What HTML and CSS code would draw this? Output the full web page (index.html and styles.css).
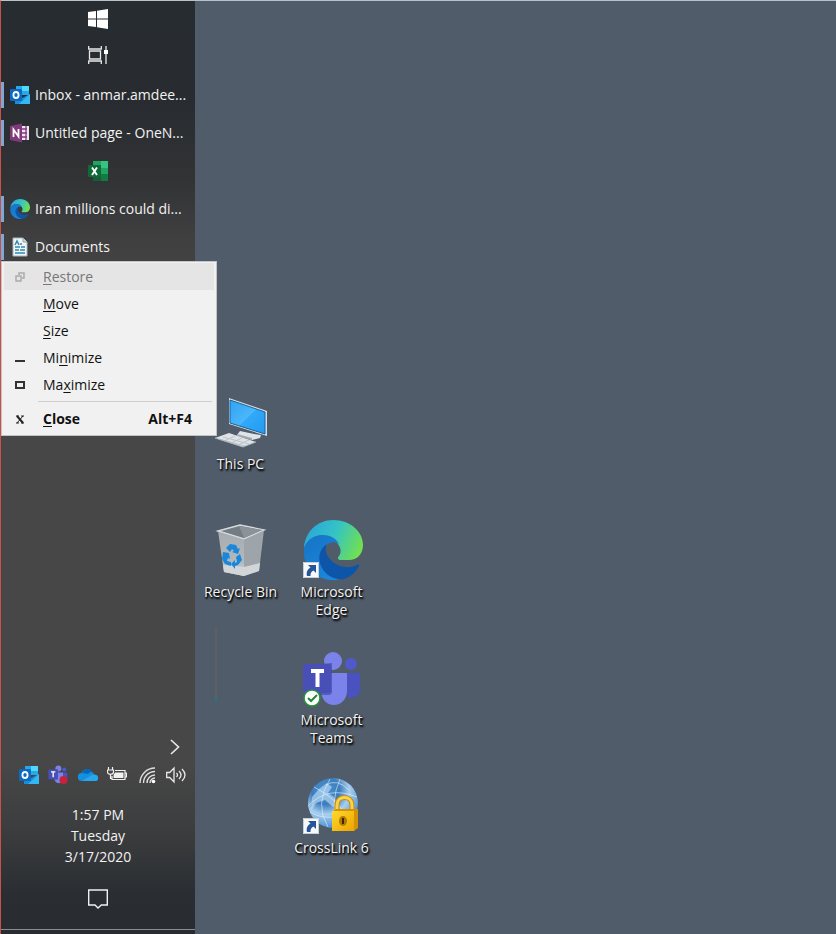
FILE: index.html
```html
<!DOCTYPE html>
<html lang="en">
<head>
<meta charset="utf-8">
<meta name="viewport" content="width=device-width, initial-scale=1">
<title>Desktop</title>
<link rel="stylesheet" href="styles.css">
</head>
<body>
<svg class="defs" aria-hidden="true">
  <defs>
    <linearGradient id="edgeTop" x1="0" y1=".3" x2="1" y2=".6">
      <stop offset="0" stop-color="#2aa5dc"/><stop offset=".5" stop-color="#35c4c4"/><stop offset="1" stop-color="#72e04e"/>
    </linearGradient>
    <linearGradient id="edgeLeft" x1="0" y1="0" x2=".6" y2="1">
      <stop offset="0" stop-color="#1673c4"/><stop offset="1" stop-color="#1b86dc"/>
    </linearGradient>
    <linearGradient id="screen" x1="0" y1="0" x2="1" y2="1">
      <stop offset="0" stop-color="#2fa3f2"/><stop offset=".5" stop-color="#4bb6fb"/><stop offset=".52" stop-color="#32a8f8"/><stop offset="1" stop-color="#219bf2"/>
    </linearGradient>
    <linearGradient id="binFace" x1="0" y1="0" x2="0" y2="1">
      <stop offset="0" stop-color="#a5abb0"/><stop offset=".7" stop-color="#b4b9bd"/><stop offset="1" stop-color="#dcdedf"/>
    </linearGradient>
    <radialGradient id="globe" cx=".35" cy=".25" r=".8">
      <stop offset="0" stop-color="#4d93d2"/><stop offset=".35" stop-color="#3c7dbd"/><stop offset=".6" stop-color="#a9cfee"/><stop offset="1" stop-color="#3a86cf"/>
    </radialGradient>
    <linearGradient id="lock" x1="0" y1="0" x2="1" y2="1">
      <stop offset="0" stop-color="#ffd92e"/><stop offset="1" stop-color="#eda400"/>
    </linearGradient>
    <symbol id="outlook" viewBox="0 0 20 20">
      <path d="M6 1h13v9H6z" fill="#28a8ea"/><path d="M12 1h7v5h-7z" fill="#50d9ff"/><path d="M6 6h6v5H6z" fill="#0364b8"/>
      <path d="M5 10l7 3 8-4v10H5z" fill="#1490df"/><path d="M20 9v10H9z" fill="#35b8f1"/>
      <rect y="4" width="12" height="12" rx="1" fill="#0a6ac4"/>
      <ellipse cx="6" cy="10" rx="2.6" ry="3" fill="none" stroke="#fff" stroke-width="1.800"/>
    </symbol>
    <symbol id="edge" viewBox="0 0 60 60">
      <path d="M1 28C2 12 14 0 30 0c18 0 30 12 30 25 0 9-6 15-14 15h-8c-3 0-4-2-2-4 3-4 2-10-4-15-7-8-22-9-31 7z" fill="url(#edgeTop)"/>
      <path d="M1 28c3-8 10-13 18-13 8 0 14 3 17 9-6-4-13-1-14 5-2 12 3 24 14 30-2 1-4 1-6 1C13 60-1 46 1 28z" fill="url(#edgeLeft)"/>
      <path d="M24 24c-8 5-10 15-5 24 5 9 14 12 22 11 7-2 12-7 15-13 0-1-1-2-2-1-10 5-22 1-28-7-4-5-4-10-2-14z" fill="#0d55a8"/>
    </symbol>
    <symbol id="shortcut" viewBox="0 0 16 16">
      <path d="M0 0h16v16H0z" fill="#f7f8fa"/><path d="M.5.5h15v15H.5z" fill="none" stroke="#c9ced6"/>
      <path d="M5 3h8v8l-2.500-2.500C8 10 7.500 11 7.500 14H4c-1-4 .5-6.500 3.500-8.500z" fill="#28549a"/>
    </symbol>
    <symbol id="teams" viewBox="0 0 60 56">
      <circle cx="49" cy="13" r="6" fill="#5059c9"/><path d="M42 22h16v17c0 5-6 9-12 8z" fill="#4a52bf"/>
      <circle cx="31" cy="10" r="9" fill="#7b83eb"/>
      <path d="M20 22h25v18c0 8-6 14-13 14-8 0-12-6-13-13z" fill="#7b83eb"/>
      <path d="M30 12v29c0 2-2 3-3 3h-8V13z" fill="#40469e" opacity=".65"/>
      <rect x="1" y="13" width="28" height="29" rx="2" fill="#4850b8"/>
      <path d="M9 20h13M15.500 20v16" stroke="#fff" stroke-width="4" fill="none"/>
    </symbol>
  </defs>
</svg>

<div class="screen">
  <aside class="taskbar">
    <div class="system">
      <button class="tool" aria-label="Start">
        <svg width="20" height="20" viewBox="0 0 20 20" fill="#fff"><path d="M0 3l8-1v7.500H0zM9 1.800L20 0v9.500H9zM0 10.500h8V18l-8-1zM9 10.500h11V20L9 18.300z"/></svg>
      </button>
      <button class="tool" aria-label="Task View">
        <svg width="20" height="20" viewBox="0 0 20 20" fill="none" stroke="#e8e8e8" stroke-width="1.300"><path d="M.7 1v3h12.600V1M.7 19v-3h12.600v3M1.500 6h11v8h-11zM18 1v18"/><path d="M16 5h4v4h-4z" fill="#fff" stroke="none"/></svg>
      </button>
    </div>

    <nav class="tasks" aria-label="Open windows">
      <button class="task open"><svg class="app"><use href="#outlook"/></svg><span>Inbox - anmar.amdee...</span></button>
      <button class="task open">
        <svg class="app" viewBox="0 0 20 20"><path d="M11 3h8v14h-8z" fill="#f3e6f3"/><path d="M12 6h5M12 10h5M12 14h5M16 3v14" stroke="#80397b" stroke-width="1.300"/><path d="M0 3l12-2.500v19L0 17z" fill="#80397b"/><path d="M3.500 14V6.500l5 7V6" fill="none" stroke="#fff" stroke-width="1.800"/></svg>
        <span>Untitled page - OneN...</span>
      </button>
      <button class="task pinned" aria-label="Excel">
        <svg class="app" viewBox="0 0 20 20"><path d="M5 0h15v20H5z" fill="#21a366"/><path d="M13 0h7v7h-7z" fill="#33c481"/><path d="M5 6h8v7H5z" fill="#107c41"/><path d="M5 13h15v7H5z" fill="#185c37"/><path d="M13 13h7v7h-7z" fill="#107c41"/><rect y="4" width="13" height="12" rx="1" fill="#0e6b38"/><path d="M4 6.500l5 7.500M9 6.500L4 14" stroke="#fff" stroke-width="1.900"/></svg>
      </button>
      <button class="task open"><svg class="app"><use href="#edge"/></svg><span>Iran millions could di...</span></button>
      <button class="task open">
        <svg class="app" viewBox="0 0 20 20"><path d="M3 1h10l4 4v14H3z" fill="#f1f5f7" stroke="#a9b6bd"/><path d="M13 1v4h4" fill="#cbd8de" stroke="#91a2ab"/><path d="M5 8l2-4 2 4M10 7h2M5 10h5M11 10h4M5 13h4M10 13h5M5 16h10" fill="none" stroke="#3189b4" stroke-width="1.500"/></svg>
        <span>Documents</span>
      </button>
    </nav>

    <div class="status">
      <button class="more" aria-label="Show hidden icons"><svg width="10" height="16" viewBox="0 0 10 16" fill="none" stroke="#e6e6e6" stroke-width="1.700"><path d="M1 1l7.500 7L1 15"/></svg></button>
      <div class="tray">
        <button aria-label="Outlook"><svg width="20" height="20"><use href="#outlook"/></svg></button>
        <button aria-label="Teams"><svg width="20" height="20" viewBox="0 0 20 20"><svg width="20" height="19"><use href="#teams"/></svg><circle cx="15.500" cy="15" r="4" fill="#c9213c"/></svg></button>
        <button aria-label="OneDrive"><svg width="20" height="20" viewBox="0 0 20 20"><path d="M4 16a4 4 0 0 1-.5-8C6 3 12 3 14 7l3 3c4 1 4 6 0 6z" fill="#1490df"/><path d="M4 8C7 3 12 3 14 7c-2 0-3 .8-4 2z" fill="#0364b8"/><path d="M4 16l10-6c5-1 7 1 6 4-.5 1.500-1.500 2-3 2z" fill="#28a8ea"/></svg></button>
        <button aria-label="Battery"><svg width="20" height="20" viewBox="0 0 20 20" fill="none" stroke="#f0f0f0" stroke-width="1.200"><path d="M8 5.500h10v9H5V11M18.500 8h1v4h-1M1.500 2v3M5.500 2v3M.5 5h6v2c0 3-6 3-6 0zM3.500 9v4.500H5"/><path d="M8 7.500h8.500V13H6.500v-3z" fill="#f0f0f0" stroke="none"/></svg></button>
        <button aria-label="Wi-Fi"><svg width="20" height="20" viewBox="0 0 20 20" fill="none" stroke="#e0e0e0" stroke-width="1.400"><path d="M3 18A15 15 0 0 1 18 3M6.500 18A11.500 11.500 0 0 1 18 6.500M10 18a8 8 0 0 1 8-8M13 18a5 5 0 0 1 5-5"/><circle cx="16.500" cy="16.500" r="1.800" fill="#fff" stroke="none"/></svg></button>
        <button aria-label="Volume"><svg width="20" height="20" viewBox="0 0 20 20" fill="none" stroke="#e8e8e8" stroke-width="1.300"><path d="M.7 7.500h3L8 3v14l-4.300-4.500h-3zM10.500 8q2 2 0 4M13 6q4 4 0 8M16 4q6 6 0 12"/></svg></button>
      </div>
      <div class="clock"><time>1:57 PM</time><span>Tuesday</span><span>3/17/2020</span></div>
      <button class="notify" aria-label="Notifications"><svg width="20" height="20" viewBox="0 0 20 20" fill="none" stroke="#f0f0f0" stroke-width="1.400"><path d="M.7 1h18.600v15h-6L10 19l-3-3H.7z"/></svg></button>
    </div>
  </aside>

  <main class="desktop">
    <button class="shortcut pc">
      <svg class="picture" viewBox="0 0 64 64">
        <path d="M20 7l38 13v25L20 33z" fill="#d7dde2"/><path d="M21 9l35 12v22L21 32z" fill="url(#screen)" stroke="#18639b"/>
        <path d="M31 40l14 3 7 1-1 3-8 2-15-5z" fill="#dfe4e8"/><path d="M28 43l15 4v2l-15-4z" fill="#9da9b2"/>
        <path d="M6 47l14-5 27 9-13 5z" fill="#dfe3e7"/><path d="M10 48l26 7M14 46l26 7M15 50l11-5M22 52l11-5M29 54l11-5" stroke="#bcc4ca" fill="none"/><path d="M6 47l28 9 13-5" fill="none" stroke="#a5afb8"/>
      </svg>
      <span>This PC</span>
    </button>
    <button class="shortcut bin">
      <svg class="picture" viewBox="0 0 64 64">
        <path d="M9 12l22-6 24 5-20 9z" fill="#747c83" stroke="#d7dadd" stroke-width="1.500"/><path d="M30 7l24 4-19 8z" fill="#8b9298"/>
        <path d="M9 12l26 8v37l-20-4z" fill="url(#binFace)"/><path d="M35 20l20-9-5 41-15 5z" fill="#9ea5aa"/><path d="M14 46l21 2 16-4-1 8-15 5-20-4z" fill="#d3d6d8"/>
        <path d="M9 12l26 8 20-9" fill="none" stroke="#d9dcde"/>
        <g fill="#1987dc"><path d="M17 29l4-4 6 1 2 4 2-1-2 6-6-2 2-1-2-2-2 3z"/><path d="M14 33l6 1 1 6-2-1-1 3 4 1v4l-6-2-3-5z"/><path d="M31 35l2 6-4 5-3 1v3l-4-5 4-4v3l2-1-1-5z"/></g>
      </svg>
      <span>Recycle Bin</span>
    </button>
    <button class="shortcut edge">
      <svg class="picture" viewBox="0 0 64 64"><svg x="3" y="1" width="60" height="60"><use href="#edge"/></svg><svg x="3" y="43" width="16" height="16"><use href="#shortcut"/></svg></svg>
      <span>Microsoft Edge</span>
    </button>
    <button class="shortcut chat">
      <svg class="picture" viewBox="0 0 64 64"><svg x="2" y="4" width="60" height="56"><use href="#teams"/></svg><circle cx="12" cy="51" r="8" fill="#fff" stroke="#26913b" stroke-width="1.500"/><path d="M8 51l3 3 6-6" fill="none" stroke="#26843a" stroke-width="2"/></svg>
      <span>Microsoft Teams</span>
    </button>
    <button class="shortcut link">
      <svg class="picture" viewBox="0 0 64 64">
        <circle cx="33" cy="28" r="25" fill="url(#globe)"/>
        <path d="M12 22l7-8 8-6 5 4-4 6 6 4 4 8-5 2-8-7-9 3-5 8z" fill="#bfddf4" opacity=".65"/>
        <path d="M26 10q11-7 23 5M8 31q20-21 49-9M10 37q12 8 29 4M30 4Q14 29 28 52M40 4q-10 22-3 48M14 12q23 11 37 35" fill="none" stroke="#e1f1fd" opacity=".6"/>
        <path d="M37 36v-6c0-10 15-10 15 0v6" fill="none" stroke="#c78a0a" stroke-width="5"/><path d="M37 36v-6c0-10 15-10 15 0v6" fill="none" stroke="#f8d34c" stroke-width="3"/>
        <path d="M32 37l4-3h22v19l-4 3H32z" fill="#d49204"/><path d="M32 36h22v20H32z" fill="url(#lock)"/><ellipse cx="43" cy="46" rx="4" ry="5" fill="#b47a00"/><path d="M42 43h2v6h-2z" fill="#362903"/>
        <svg x="3" y="43" width="16" height="16"><use href="#shortcut"/></svg>
      </svg>
      <span>CrossLink 6</span>
    </button>
    <i class="trace"></i>
  </main>

  <div class="menu" role="menu">
    <button role="menuitem" disabled><svg viewBox="0 0 10 10" fill="none" stroke="#aaa" stroke-width="1.500"><path d="M1 4h5v5H1zM4 3V1h5v5H7"/></svg><span><u>R</u>estore</span></button>
    <button role="menuitem"><i></i><span><u>M</u>ove</span></button>
    <button role="menuitem"><i></i><span><u>S</u>ize</span></button>
    <button role="menuitem"><svg viewBox="0 0 10 10"><path d="M0 7h10v2H0z" fill="#333"/></svg><span>Mi<u>n</u>imize</span></button>
    <button role="menuitem"><svg viewBox="0 0 10 10"><path d="M1 2h8v6H1z" fill="none" stroke="#333" stroke-width="2"/></svg><span>Ma<u>x</u>imize</span></button>
    <hr>
    <button role="menuitem" class="close"><svg viewBox="0 0 10 10" fill="none" stroke="#222"><path d="M2 2l6 7" stroke-width="2"/><path d="M8 2L2 9M1 2h3M6 2h3M1 9h3M6 9h3"/></svg><span><u>C</u>lose</span><kbd>Alt+F4</kbd></button>
  </div>
</div>
</body>
</html>
```
FILE: styles.css
```css
* {
  box-sizing: border-box;
}

body {
  margin: 0;
  font: 14px/18px "Open Sans", "Noto Sans", sans-serif;
  color: #f2f2f2;
  background: #505c69;
}

button {
  margin: 0;
  padding: 0;
  border: 0;
  background: none;
  color: inherit;
  font: inherit;
}

svg {
  display: block;
  flex: none;
}

.defs {
  position: absolute;
  width: 0;
  height: 0;
}

.screen {
  position: relative;
  display: flex;
  min-height: 100vh;
  border-top: 1px solid #b9c2c8;
  border-left: 1px solid #c9504b;
}

.taskbar {
  display: flex;
  flex-direction: column;
  flex: none;
  width: 194px;
  background: linear-gradient(#272c30 0, #282c30 100px, #323335 180px, #404041 240px, #474747 320px, #474747 calc(100% - 170px), #3d3e3f calc(100% - 110px), #2a2e32 calc(100% - 40px), #282b2f 100%);
}

.system {
  display: flex;
  flex-direction: column;
  align-items: center;
}

.tool {
  display: grid;
  place-items: center;
  width: 100%;
  height: 36px;
}

.tasks {
  display: flex;
  flex-direction: column;
  margin-top: 3px;
}

.task {
  display: flex;
  align-items: center;
  gap: 5px;
  height: 38px;
  padding-left: 6px;
  white-space: nowrap;
}

.task.open::before {
  content: "";
  width: 3px;
  height: 26px;
  margin-left: -6px;
  margin-right: 1px;
  background: #7da9d6;
}

.task.pinned {
  justify-content: center;
  padding: 0;
}

.app {
  width: 20px;
  height: 20px;
}

.status {
  display: flex;
  flex-direction: column;
  align-items: center;
  margin-top: auto;
  border-bottom: 1px solid #8c8f91;
  margin-bottom: 4px;
}

.more {
  align-self: flex-end;
  padding: 4px 15px;
}

.tray {
  display: flex;
  justify-content: space-between;
  align-self: stretch;
  padding: 6px 9px 0 18px;
}

.clock {
  display: flex;
  flex-direction: column;
  align-items: center;
  margin-top: 19px;
  line-height: 21px;
}

.notify {
  padding: 22px 0 20px;
}

.desktop {
  position: relative;
  display: grid;
  grid-template-columns: 91px 91px;
  grid-auto-rows: 128px;
  flex: 1;
  align-content: start;
  padding-top: 390px;
}

.shortcut {
  display: flex;
  flex-direction: column;
  align-items: center;
  padding: 0 8px;
  text-shadow: 1px 1px 2px #000, 1px 2px 2px #000;
}

.shortcut span {
  width: min-content;
  min-width: 100%;
}

.picture {
  width: 64px;
  height: 64px;
}

.pc {
  grid-area: 1 / 1;
}

.bin {
  grid-area: 2 / 1;
}

.edge {
  grid-area: 2 / 2;
}

.chat {
  grid-area: 3 / 2;
}

.link {
  grid-area: 4 / 2;
}

.pc span,
.bin span,
.link span {
  white-space: nowrap;
}

.trace {
  position: absolute;
  top: 626px;
  left: 20px;
  width: 2px;
  height: 75px;
  background: linear-gradient(#5e6163 70px, #217a78 70px);
}

.menu {
  position: absolute;
  top: 260px;
  left: 0;
  width: 216px;
  padding: 1px 2px 3px;
  border: 1px solid #c2c4c6;
  background: #f1f1f1;
  color: #111;
}

.menu button {
  display: grid;
  grid-template-columns: 39px 1fr auto;
  align-items: center;
  width: 100%;
  height: 27px;
  padding-right: 22px;
  text-align: left;
}

.menu button:disabled {
  background: #e5e5e5;
  color: #777;
}

.menu svg {
  width: 10px;
  height: 10px;
  margin-left: 11px;
}

.menu hr {
  height: 1px;
  margin: 3px 2px;
  border: 0;
  margin-left: 34px;
  background: #cfcfcf;
}

.menu .close {
  font-weight: 700;
}

kbd {
  font: inherit;
}

u {
  text-underline-offset: 2px;
}
```
